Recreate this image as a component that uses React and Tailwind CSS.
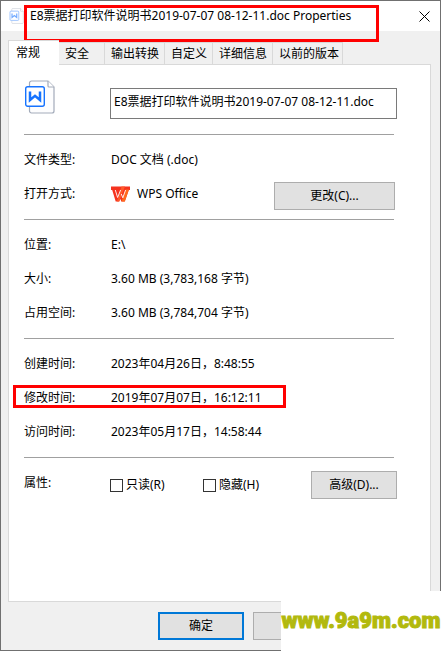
import React, { useState } from "react";

const tabs = ["常规", "安全", "输出转换", "自定义", "详细信息", "以前的版本"];

const sizeRows = [
  { label: "位置:", value: "E:\\" },
  { label: "大小:", value: "3.60 MB (3,783,168 字节)" },
  { label: "占用空间:", value: "3.60 MB (3,784,704 字节)" },
];

const timeRows = [
  { label: "创建时间:", value: "2023年04月26日，8:48:55" },
  { label: "修改时间:", value: "2019年07月07日，16:12:11", marked: true },
  { label: "访问时间:", value: "2023年05月17日，14:58:44" },
];

function DocIcon({ className }) {
  return (
    <svg viewBox="-1 0 31 34" fill="none" className={className} aria-hidden="true">
      <path
        d="M4.500 6.500V3a2 2 0 0 1 2-2H23l6 6v24a2 2 0 0 1-2 2H6.500a2 2 0 0 1-2-2v-4"
        fill="#fdfdfe"
        stroke="#a3abba"
        strokeWidth="1.2"
      />
      <path d="M23 1v5a1 1 0 0 0 1 1h5" fill="#fff" stroke="#a3abba" strokeWidth="1.2" />
      <rect x="0.700" y="6.700" width="18.600" height="19.600" rx="2" fill="#fff" stroke="#1673ff" strokeWidth="1.400" />
      <path d="M5 11.500V20L10 15.800L15 20V11.500" stroke="#1673ff" strokeWidth="2.500" />
    </svg>
  );
}

function WpsIcon() {
  return (
    <svg viewBox="0 0 19 16" className="h-4 w-[19px]" aria-hidden="true">
      <path d="M0 0.500H19V4H17.800L13.800 15.500H10.300L9.300 13L8.200 15.500H4.700L1.200 4H0Z" fill="#f5331f" />
      <path d="M10.500 0.500H14L9 13L8.200 15.500H6L8 9Z" fill="#ff5a2a" />
      <path d="M14.500 3.500H17.900L13.800 15.500H10.500Z" fill="#ff6a1c" />
      <path d="M4.300 4L6.600 11.500L9.600 4M10.300 8L11.800 11.800L14.600 4" fill="none" stroke="#fff" strokeWidth="0.900" />
    </svg>
  );
}

function Row({ label, value, marked, children }) {
  return (
    <div className="relative flex h-[34px] items-center">
      <dt className="w-[87px] shrink-0">{label}</dt>
      <dd className="flex flex-1 items-center whitespace-pre">{value || children}</dd>
      {marked && (
        <div className="pointer-events-none absolute top-1 -left-[11px] h-[23px] w-[273px] border-3 border-[#ff0000]" />
      )}
    </div>
  );
}

function Divider() {
  return <hr className="mr-[3px] border-t border-[#a0a0a0]" />;
}

const buttonStyle = "h-7 border border-[#adadad] bg-[#e1e1e1]";

function App() {
  const [active, setActive] = useState(0);
  const [fileName, setFileName] = useState("E8票据打印软件说明书2019-07-07 08-12-11.doc");
  const [readOnly, setReadOnly] = useState(false);
  const [hidden, setHidden] = useState(false);

  return (
    <div
      lang="zh-CN"
      className="relative flex min-h-screen flex-col border border-[#707070] bg-[#f0f0f0] font-['Noto_Sans','Noto_Sans_CJK_SC',sans-serif] text-[12px] leading-4 text-black"
    >
      {/* Title bar */}
      <header className="relative flex h-[30px] shrink-0 items-center bg-white pr-[10px] pl-2">
        <DocIcon className="h-4 w-[15px] opacity-60" />
        <h1 className="flex-1 pl-[6px] whitespace-nowrap">
          E8票据打印软件说明书2019-07-07 08-12-11.doc Properties
        </h1>
        <button type="button" aria-label="关闭">
          <svg viewBox="0 0 11 11" className="size-[11px]" fill="none" stroke="#000">
            <path d="M0.500 0.500L10.500 10.500M10.500 0.500L0.500 10.500" />
          </svg>
        </button>
        <div className="pointer-events-none absolute top-1 left-[23px] z-10 h-[37px] w-[355px] border-3 border-[#ff0000]" />
      </header>

      <main className="flex flex-1 flex-col pt-[9px] pr-[9px] pl-[7px]">
        {/* Tabs */}
        <div role="tablist" className="flex h-6 items-end whitespace-nowrap">
          {tabs.map((tab, i) => (
            <button
              key={tab}
              type="button"
              role="tab"
              aria-selected={active === i}
              onClick={() => setActive(i)}
              className={
                active === i
                  ? "z-10 -mb-px h-[25px] min-w-[51px] border-t border-l border-[#d9d9d9] bg-white pr-3 pl-[7px] pb-px text-left"
                  : "h-[22px] min-w-[46px] border-t border-r border-[#d9d9d9] pr-[5px] pl-[6px] text-left last:pr-[3px]"
              }
            >
              {tab}
            </button>
          ))}
        </div>

        {/* Active page */}
        <section className="flex-1 border border-[#d9d9d9] bg-white pr-[33px] pl-[15px]">
          <div className="flex items-start pt-[15px] pb-[15px]">
            <DocIcon className="h-[34px] w-[31px]" />
            <input
              type="text"
              aria-label="文件名"
              value={fileName}
              onChange={(e) => setFileName(e.target.value)}
              className="mt-2 ml-[55px] h-[31px] min-w-0 flex-1 border border-[#7a7a7a] px-[3px] pb-[6px] outline-none"
            />
          </div>

          <Divider />
          <dl className="py-2">
            <Row label="文件类型:" value="DOC 文档 (.doc)" />
            <Row label="打开方式:">
              <WpsIcon />
              <span className="flex-1 pl-[7px]">WPS Office</span>
              <button type="button" className={`${buttonStyle} mt-1 mr-[2px] w-[121px]`}>
                更改(C)...
              </button>
            </Row>
          </dl>

          <Divider />
          <dl className="py-2">
            {sizeRows.map((row) => (
              <Row key={row.label} {...row} />
            ))}
          </dl>

          <Divider />
          <dl className="py-2">
            {timeRows.map((row) => (
              <Row key={row.label} {...row} />
            ))}
          </dl>

          <Divider />
          <div role="group" aria-labelledby="attributes" className="flex items-center pt-[13px] pb-4">
            <span id="attributes" className="w-[86px] pb-1">
              属性:
            </span>
            <label className="flex w-[93px] items-center gap-[3px]">
              <input
                type="checkbox"
                checked={readOnly}
                onChange={(e) => setReadOnly(e.target.checked)}
                className="size-[13px] appearance-none border border-[#333] bg-white checked:bg-[#333]"
              />
              只读(R)
            </label>
            <label className="flex items-center gap-[3px]">
              <input
                type="checkbox"
                checked={hidden}
                onChange={(e) => setHidden(e.target.checked)}
                className="size-[13px] appearance-none border border-[#333] bg-white checked:bg-[#333]"
              />
              隐藏(H)
            </label>
            <button type="button" className={`${buttonStyle} ml-auto w-[86px]`}>
              高级(D)...
            </button>
          </div>
        </section>
      </main>

      {/* Dialog buttons */}
      <footer className="flex justify-end gap-[9px] py-[10px] pr-[101px]">
        <button type="button" className="h-7 w-[86px] border-2 border-[#0078d7] bg-[#e1e1e1]">
          确定
        </button>
        <button type="button" className={`${buttonStyle} w-[86px]`} />
      </footer>

      {/* Watermark */}
      <div className="absolute -right-px -bottom-px flex h-[60px] w-40 items-center justify-center bg-white font-['Roboto','Liberation_Sans',sans-serif] text-[22px] leading-7 font-black text-[#b2b90d] [-webkit-text-stroke:1px_#b2b90d]">
        www.9a9m.com
      </div>
    </div>
  );
}

export default App;
